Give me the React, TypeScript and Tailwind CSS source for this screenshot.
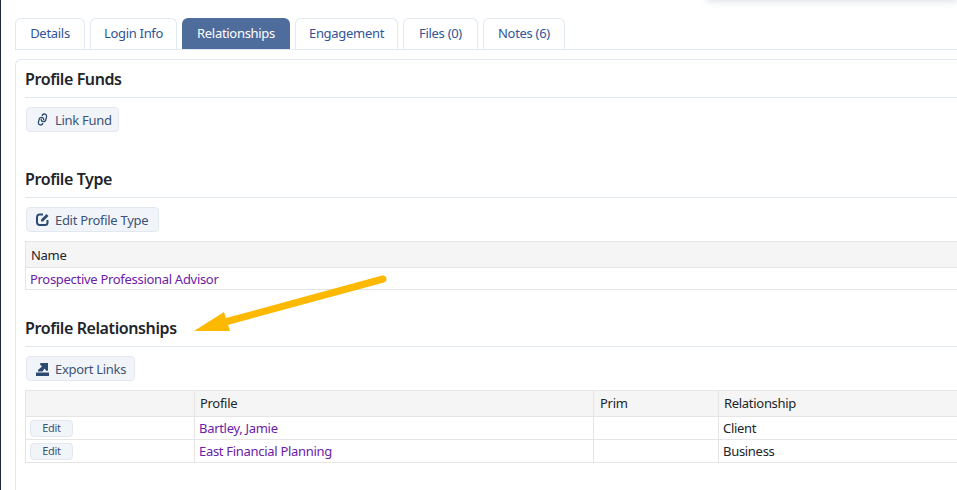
import { FaLink } from "react-icons/fa6";
import type { ReactNode } from "react";

const tabs = [
  { label: "Details", width: "w-[70px]" },
  { label: "Login Info", width: "w-[87px]" },
  { label: "Relationships", width: "w-[108px]", active: true },
  { label: "Engagement", width: "w-[103px]" },
  { label: "Files (0)", width: "w-[75px]" },
  { label: "Notes (6)", width: "w-[82px]" },
];

const EditIcon = () => (
  <svg width="13" height="13" viewBox="0 0 13 13" fill="none">
    <path d="M7 1.500H3.500A2.500 2.500 0 0 0 1 4v5.500A2.500 2.500 0 0 0 3.500 12H9a2.500 2.500 0 0 0 2.500-2.500V7" stroke="#2d4a73" strokeWidth="2" />
    <path d="M5 6.500L10.500 1L12.500 3L7 8.500H5z" fill="#2d4a73" />
  </svg>
);

const ExportIcon = () => (
  <svg width="13" height="14" viewBox="0 0 13 14" fill="#2d4a73">
    <path d="M0 10.500h13V14H0z" />
    <path d="M2 9.500V8L6 4.500L4 2.500L4.500 1H12V8.500L10.500 9L8.500 6.500L6.500 9.500z" />
  </svg>
);

const ActionButton = ({ icon, label, width }: { icon: ReactNode; label: string; width: string }) => (
  <button className={`flex h-[25px] items-center gap-[6px] rounded-[4px] border border-[#e2e8f0] bg-[#f1f5f9] pl-[9px] text-[13px] tracking-[-0.3px] text-[#3c5378] ${width}`}>
    {icon}
    <span className="pt-[2px]">{label}</span>
  </button>
);

const SectionTitle = ({ children }: { children: ReactNode }) => (
  <div className="flex h-[38px] items-center border-b border-[#e2e8f0] text-[16px] font-semibold tracking-[-0.4px] text-[#212529]">
    {children}
  </div>
);

const EditButton = () => (
  <button className="ml-[4px] flex h-[17px] w-[43px] items-center justify-center rounded-[4px] border border-[#e2e8f0] bg-[#f1f5f9] text-[11px] text-[#3c5378]">
    Edit
  </button>
);

export default function App() {
  return (
    <div className="relative h-[490px] w-[957px] overflow-hidden border-l border-l-[#1e293b] bg-white font-['Noto_Sans',sans-serif]">
      {/* popup edge at the top */}
      <div className="absolute right-0 top-[-10px] h-[10px] w-[250px] border-b border-[#cbd5e1] bg-white shadow-[0_2px_6px_rgba(100,116,139,0.2)]" />

      <div className="ml-[14px] pt-[18px]">
        <div className="flex h-[32px] w-[1000px] gap-[5px] border-b border-[#e2e8f0]">
          {tabs.map((tab) => (
            <div
              key={tab.label}
              className={`flex h-[31px] items-center justify-center rounded-t-[6px] text-[13px] tracking-[-0.3px] ${tab.width} ${
                tab.active
                  ? "bg-[#4f6d9c] text-white"
                  : "border border-b-0 border-[#e2e8f0] text-[#2f5597]"
              }`}
            >
              {tab.label}
            </div>
          ))}
        </div>

        <div className="mt-[9px] h-[440px] w-[1000px] rounded-tl-[6px] border-l border-t border-[#e2e8f0] pl-[9px]">
          <SectionTitle>Profile Funds</SectionTitle>
          <div className="ml-[1px] mt-[9px]">
            <ActionButton icon={<FaLink size={13} color="#2d4a73" className="-rotate-[30deg]" />} label="Link Fund" width="w-[93px]" />
          </div>

          <div className="mt-[28px]">
            <SectionTitle>Profile Type</SectionTitle>
          </div>
          <div className="ml-[1px] mt-[9px]">
            <ActionButton icon={<EditIcon />} label="Edit Profile Type" width="w-[133px]" />
          </div>
          <div className="mt-[9px] border border-[#e5e5e5] text-[13px] tracking-[-0.3px]">
            <div className="flex h-[26px] items-center border-b border-[#e5e5e5] bg-[#f5f5f5] pl-[5px] pt-[2px] text-[#212529]">Name</div>
            <div className="flex h-[21px] items-center pl-[4px] pt-[2px] text-[#6b21a8]">Prospective Professional Advisor</div>
          </div>

          <div className="mt-[19px]">
            <SectionTitle>Profile Relationships</SectionTitle>
          </div>
          <div className="ml-[1px] mt-[9px]">
            <ActionButton icon={<ExportIcon />} label="Export Links" width="w-[109px]" />
          </div>
          <div className="mt-[9px] border border-[#e5e5e5] text-[13px] tracking-[-0.3px]">
            <div className="grid h-[26px] grid-cols-[169px_399px_125px_1fr] items-stretch border-b border-[#e5e5e5] bg-[#f5f5f5] text-[#212529]">
              <div className="border-r border-[#e5e5e5]" />
              <div className="flex items-center border-r border-[#e5e5e5] pl-[5px]">Profile</div>
              <div className="flex items-center border-r border-[#e5e5e5] pl-[6px]">Prim</div>
              <div className="flex items-center pl-[5px]">Relationship</div>
            </div>
            {[
              { name: "Bartley, Jamie", rel: "Client" },
              { name: "East Financial Planning", rel: "Business" },
            ].map((row, i) => (
              <div
                key={row.name}
                className={`grid grid-cols-[169px_399px_125px_1fr] items-stretch ${i === 0 ? "h-[23px] border-b border-[#e5e5e5]" : "h-[22px]"}`}
              >
                <div className="flex items-center border-r border-[#e5e5e5]">
                  <EditButton />
                </div>
                <div className="flex items-center border-r border-[#e5e5e5] pl-[4px] pt-[1px] text-[#6b21a8]">{row.name}</div>
                <div className="border-r border-[#e5e5e5]" />
                <div className="flex items-center pl-[4px] pt-[1px] text-[#212529]">{row.rel}</div>
              </div>
            ))}
          </div>
        </div>
      </div>

      {/* annotation arrow */}
      <svg className="absolute left-[-1px] top-0" width="957" height="490" viewBox="0 0 957 490" fill="none">
        <path d="M383 279L225 322" stroke="#fdb900" strokeWidth="7" strokeLinecap="round" />
        <path d="M194 331L224 312L230 331Z" fill="#fdb900" />
      </svg>
    </div>
  );
}
